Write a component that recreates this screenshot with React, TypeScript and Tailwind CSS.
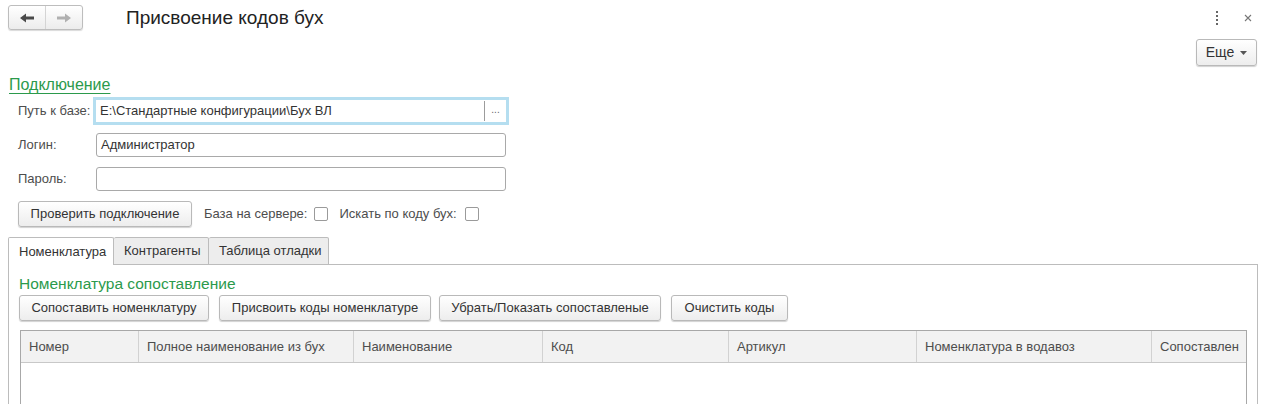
import React from "react";

const Btn = ({ children, className = "" }: { children: React.ReactNode; className?: string }) => (
  <div
    className={
      "flex items-center justify-center rounded-[3px] border border-[#b9b9b9] bg-gradient-to-b from-white to-[#ededed] text-[13px] text-[#333] shadow-[0_1px_1px_rgba(0,0,0,0.18)] " +
      className
    }
  >
    {children}
  </div>
);

const Check = () => (
  <div className="h-[14px] w-[14px] rounded-[2px] border border-[#9a9a9a] bg-white" />
);

export default function App() {
  const cols: [string, number][] = [
    ["Номер", 118],
    ["Полное наименование из бух", 215],
    ["Наименование", 189],
    ["Код", 186],
    ["Артикул", 188],
    ["Номенклатура в водавоз", 235],
    ["Сопоставлен", 96],
  ];
  return (
    <div
      className="relative h-[404px] w-[1267px] overflow-hidden bg-white text-[#333]"
      style={{ fontFamily: '"Liberation Sans", Arial, sans-serif' }}
    >
      {/* header */}
      <div className="flex h-[35px] items-center">
        <div className="ml-[8px] flex h-[25px] w-[75px] rounded-[3px] border border-[#bdbdbd] bg-gradient-to-b from-white to-[#ececec] shadow-[0_1px_1px_rgba(0,0,0,0.15)]">
          <div className="flex w-[37px] items-center justify-center border-r border-[#d4d4d4]">
            <svg width="16" height="12" viewBox="0 0 16 12">
              <path d="M1 6 L7 1.5 L7 4.5 L15 4.5 L15 7.5 L7 7.5 L7 10.5 Z" fill="#4a4a4a" />
            </svg>
          </div>
          <div className="flex flex-1 items-center justify-center">
            <svg width="16" height="12" viewBox="0 0 16 12">
              <path d="M15 6 L9 1.5 L9 4.5 L1 4.5 L1 7.5 L9 7.5 L9 10.5 Z" fill="#b0b0b0" />
            </svg>
          </div>
        </div>
        <div className="ml-[43px] text-[19px] leading-[22px] text-[#222]">Присвоение кодов бух</div>
        <div className="flex-1" />
        <div className="mr-[26px] flex flex-col gap-[2px]">
          <div className="h-[2px] w-[2px] bg-[#666]" />
          <div className="h-[2px] w-[2px] bg-[#666]" />
          <div className="h-[2px] w-[2px] bg-[#666]" />
          <div className="h-[2px] w-[2px] bg-[#666]" />
        </div>
        <svg className="mr-[15px]" width="8" height="8" viewBox="0 0 8 8">
          <path d="M1 1 L7 7 M7 1 L1 7" stroke="#777" strokeWidth="1.1" />
        </svg>
      </div>

      {/* Еще */}
      <div className="mt-[4px] flex justify-end pr-[10px]">
        <Btn className="h-[27px] w-[61px] gap-[6px] text-[14px]">
          <span>Еще</span>
          <svg width="7" height="4" viewBox="0 0 7 4">
            <path d="M0 0 L7 0 L3.5 4 Z" fill="#555" />
          </svg>
        </Btn>
      </div>

      {/* Подключение */}
      <div className="ml-[9px] mt-[9px] text-[16px] leading-[20px] text-[#2b9a4c] underline decoration-[1px] underline-offset-[3px]">
        Подключение
      </div>

      {/* Path */}
      <div className="mt-[2px] flex items-center">
        <div className="ml-[18px] w-[75px] text-[13px] text-[#4d4d4d]">Путь к базе:</div>
        <div className="flex h-[28px] w-[416px] items-center border-[3px] border-[#b5def0] bg-white">
          <div className="flex-1 pl-[4px] text-[13px] text-[#333]">E:\Стандартные конфигурации\Бух ВЛ</div>
          <div className="flex h-[20px] w-[22px] items-center justify-center border-l border-[#9c9c9c] pb-[4px] text-[10px] text-[#666]">
            ...
          </div>
        </div>
      </div>

      {/* Login */}
      <div className="mt-[8px] flex items-center">
        <div className="ml-[18px] w-[78px] text-[13px] text-[#4d4d4d]">Логин:</div>
        <div className="flex h-[24px] w-[410px] items-center rounded-[3px] border border-[#a9a9a9] bg-white pl-[4px] text-[13px] text-[#333]">
          Администратор
        </div>
      </div>

      {/* Password */}
      <div className="mt-[10px] flex items-center">
        <div className="ml-[18px] w-[78px] text-[13px] text-[#4d4d4d]">Пароль:</div>
        <div className="h-[24px] w-[410px] rounded-[3px] border border-[#a9a9a9] bg-white" />
      </div>

      {/* check row */}
      <div className="mt-[10px] flex items-center">
        <Btn className="ml-[18px] h-[26px] w-[174px]">Проверить подключение</Btn>
        <div className="ml-[12px] text-[13px] text-[#4d4d4d]">База на сервере:</div>
        <div className="ml-[7px]">
          <Check />
        </div>
        <div className="ml-[11px] text-[13px] text-[#4d4d4d]">Искать по коду бух:</div>
        <div className="ml-[8px]">
          <Check />
        </div>
      </div>

      {/* tabs */}
      <div className="ml-[8px] mt-[10px] flex h-[28px] items-end">
        <div className="relative z-10 flex h-[28px] w-[106px] items-center rounded-t-[2px] border border-b-0 border-[#bcbcbc] bg-white pl-[10px] text-[13px] text-[#333]">
          Номенклатура
        </div>
        <div className="flex h-[28px] w-[95px] items-center rounded-t-[2px] border border-l-0 border-[#bcbcbc] bg-[#ededed] pl-[10px] text-[13px] text-[#333]">
          Контрагенты
        </div>
        <div className="flex h-[28px] w-[120px] items-center rounded-t-[2px] border border-l-0 border-[#bcbcbc] bg-[#ededed] pl-[10px] text-[13px] text-[#333]">
          Таблица отладки
        </div>
      </div>

      {/* panel */}
      <div className="-mt-[1px] ml-[8px] h-[200px] w-[1250px] border border-[#bcbcbc] pl-[10px]">
        <div className="mt-[9px] text-[15.5px] leading-[20px] text-[#2b9a4c]">Номенклатура сопоставление</div>
        <div className="mt-[1px] flex gap-[8px]">
          <Btn className="h-[26px] w-[190px]">Сопоставить номенклатуру</Btn>
          <Btn className="ml-[2px] h-[26px] w-[212px]">Присвоить коды номенклатуре</Btn>
          <Btn className="h-[26px] w-[222px]">Убрать/Показать сопоставленые</Btn>
          <Btn className="ml-[2px] h-[26px] w-[117px]">Очистить коды</Btn>
        </div>
        <div className="ml-[1px] mt-[9px] h-[120px] w-[1227px] border border-[#a8a8a8]">
          <div className="flex h-[32px] border-b border-[#c8c8c8] bg-[#f2f2f2]">
            {cols.map(([t, w], i) => (
              <div
                key={t}
                className={
                  "flex items-center pl-[8px] text-[13px] text-[#4d4d4d] " +
                  (i < cols.length - 1 ? "border-r border-[#d2d2d2]" : "")
                }
                style={{ width: i < cols.length - 1 ? w : undefined, flex: i === cols.length - 1 ? 1 : undefined }}
              >
                {t}
              </div>
            ))}
          </div>
        </div>
      </div>
    </div>
  );
}
